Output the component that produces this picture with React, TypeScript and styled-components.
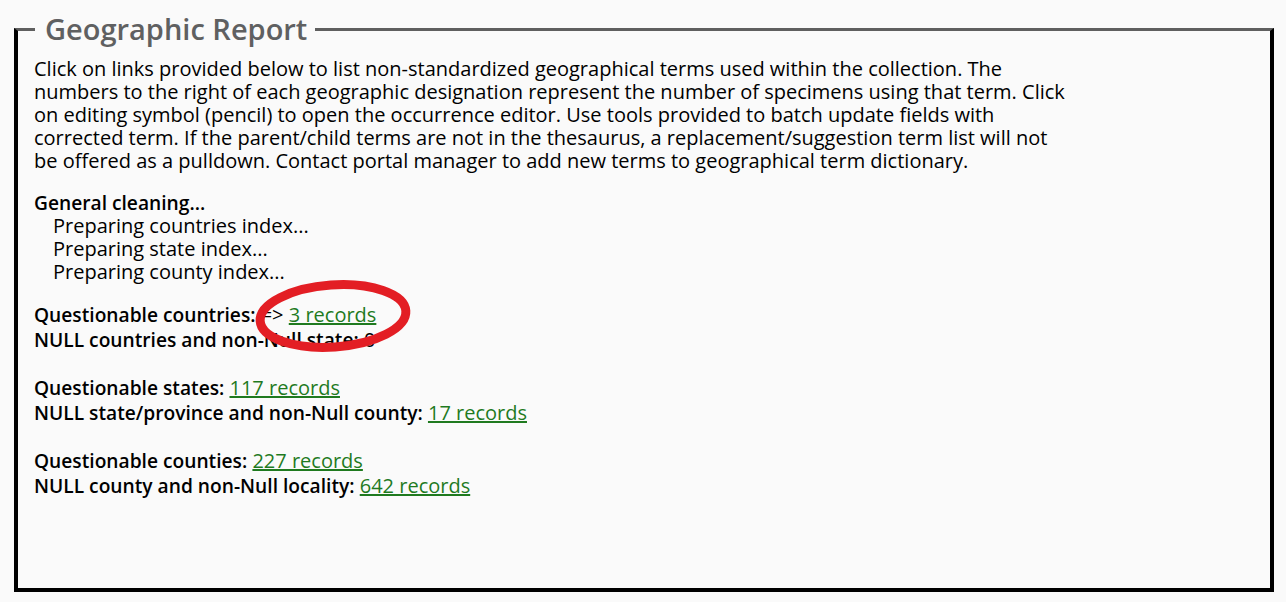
import React from 'react';
import styled, { createGlobalStyle } from 'styled-components';

const GlobalStyle = createGlobalStyle`
  html, body {
    margin: 0;
    padding: 0;
    background: #fafafa;
  }
  body {
    font-family: "Open Sans", "Liberation Sans", sans-serif;
    color: #000;
  }
`;

const Page = styled.div`
  padding: 10px 12px 10px 14px;
`;

const Fieldset = styled.fieldset`
  margin: 0;
  padding: 9px 16px 16px 16px;
  border: 4px solid #000;
  border-top: 3px solid #5f5f5f;
  box-sizing: border-box;
  height: 582px;
`;

const Legend = styled.legend`
  margin-left: 1px;
  padding: 0 8px 0 10px;
  font-size: 29px;
  font-weight: 600;
  color: #5f6061;
  line-height: 38px;
`;

const Intro = styled.p`
  margin: 0 0 19px 0;
  max-width: 1040px;
  font-size: 20px;
  line-height: 23px;
`;

const Block = styled.div<{ $gap?: number }>`
  margin-bottom: ${({ $gap }) => $gap ?? 19}px;
  font-size: 20px;
`;

const Heading = styled.div`
  font-size: 19.2px;
  font-weight: 600;
  line-height: 23px;
`;

const Step = styled.div`
  padding-left: 19px;
  line-height: 23px;
`;

const Row = styled.div`
  line-height: 25px;
`;

const Label = styled.span`
  font-size: 19.2px;
  font-weight: 600;
`;

const RecordLink = styled.a`
  color: #1f7a1f;
  text-decoration: underline;
  cursor: pointer;
`;

const Marked = styled.span`
  position: relative;
  display: inline-block;
`;

const Circle = styled.svg`
  position: absolute;
  left: 50%;
  top: 50%;
  width: 160px;
  height: 76px;
  transform: translate(-50%, -50%);
  pointer-events: none;
  overflow: visible;
`;

type Pair = {
  label: string;
  value: React.ReactNode;
};

const sections: Pair[][] = [
  [
    { label: 'Questionable states:', value: <RecordLink>117 records</RecordLink> },
    { label: 'NULL state/province and non-Null county:', value: <RecordLink>17 records</RecordLink> },
  ],
  [
    { label: 'Questionable counties:', value: <RecordLink>227 records</RecordLink> },
    { label: 'NULL county and non-Null locality:', value: <RecordLink>642 records</RecordLink> },
  ],
];

const App: React.FC = () => {
  return (
    <>
      <GlobalStyle />
      <Page>
        <Fieldset>
          <Legend>Geographic Report</Legend>
          <Intro>
            Click on links provided below to list non-standardized geographical terms used within the collection. The
            numbers to the right of each geographic designation represent the number of specimens using that term. Click
            on editing symbol (pencil) to open the occurrence editor. Use tools provided to batch update fields with
            corrected term. If the parent/child terms are not in the thesaurus, a replacement/suggestion term list will not
            be offered as a pulldown. Contact portal manager to add new terms to geographical term dictionary.
          </Intro>
          <Block>
            <Heading>General cleaning...</Heading>
            <Step>Preparing countries index...</Step>
            <Step>Preparing state index...</Step>
            <Step>Preparing county index...</Step>
          </Block>
          <Block $gap={23}>
            <Row>
              <Label>Questionable countries:</Label> =&gt;{' '}
              <Marked>
                <RecordLink>3 records</RecordLink>
                <Circle viewBox="0 0 160 76">
                  <ellipse
                    cx="80"
                    cy="39"
                    rx="73"
                    ry="31"
                    fill="none"
                    stroke="#e31e24"
                    strokeWidth="9"
                    transform="rotate(-4 80 39)"
                  />
                </Circle>
              </Marked>
            </Row>
            <Row>
              <Label>NULL countries and non-Null state:</Label> 0
            </Row>
          </Block>
          {sections.map((pairs, i) => (
            <Block key={i} $gap={23}>
              {pairs.map((p) => (
                <Row key={p.label}>
                  <Label>{p.label}</Label> {p.value}
                </Row>
              ))}
            </Block>
          ))}
        </Fieldset>
      </Page>
    </>
  );
};

export default App;
